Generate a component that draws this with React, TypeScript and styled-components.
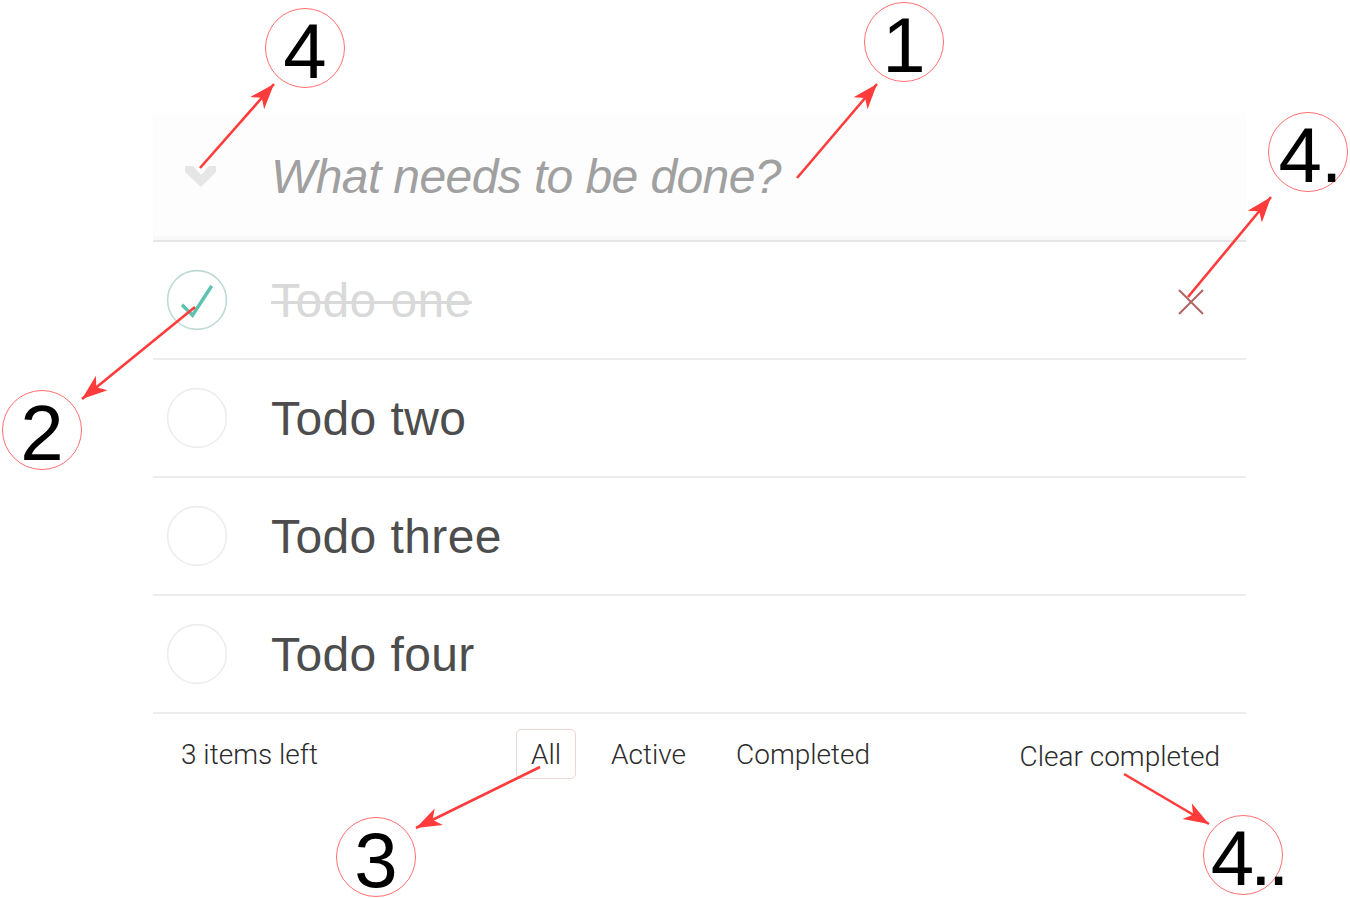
import React from "react";
import styled, { createGlobalStyle } from "styled-components";

const GlobalStyle = createGlobalStyle`
  html, body { margin: 0; padding: 0; background: #ffffff; }
  body { font-family: "Liberation Sans", Arial, sans-serif; }
  * { box-sizing: border-box; }
`;

const Stage = styled.div`
  position: relative;
  width: 1350px;
  height: 898px;
  overflow: hidden;
  padding: 113px 0 0 153px;
  background: #ffffff;
`;

const TodoApp = styled.section`
  width: 1093px;
`;

const Header = styled.header`
  display: flex;
  align-items: center;
  height: 127px;
  background: #fdfdfd;
  box-shadow: inset 0 -4px 2px rgba(0, 0, 0, 0.025);
`;

const ToggleAll = styled.div`
  width: 118px;
  flex: none;
  display: flex;
  align-items: center;
  padding-left: 32px;
`;

const NewTodo = styled.input`
  flex: 1;
  height: 127px;
  border: none;
  outline: none;
  background: transparent;
  padding: 0;
  font-family: "Liberation Sans", Arial, sans-serif;
  font-size: 48px;
  letter-spacing: -0.6px;
  color: #4d4d4d;
  &::placeholder {
    font-style: italic;
    color: #a0a0a0;
  }
`;

const TodoList = styled.ul`
  list-style: none;
  margin: 0;
  padding: 0;
  border-top: 2px solid #e6e6e6;
`;

const TodoItem = styled.li`
  display: flex;
  align-items: center;
  height: 118px;
  border-bottom: 2px solid #ededed;
`;

const ToggleCell = styled.div`
  width: 118px;
  flex: none;
  display: flex;
  align-items: center;
  padding-left: 14px;
`;

const Label = styled.span<{ $done?: boolean }>`
  font-family: "Liberation Sans", Arial, sans-serif;
  font-size: 48px;
  letter-spacing: 0.4px;
  color: ${(p) => (p.$done ? "#d9d9d9" : "#4d4d4d")};
  text-decoration: ${(p) => (p.$done ? "line-through" : "none")};
  text-decoration-thickness: 3px;
`;

const Destroy = styled.button`
  margin-left: auto;
  margin-right: 42px;
  border: none;
  background: none;
  padding: 0;
  display: flex;
  align-items: center;
  margin-top: 4px;
`;

const Footer = styled.footer`
  display: grid;
  grid-template-columns: 1fr auto 1fr;
  align-items: center;
  height: 80px;
  padding: 0 26px 0 28px;
  font-family: Roboto, "Liberation Sans", Arial, sans-serif;
  font-weight: 300;
  font-size: 28px;
  color: #2b2b2b;
`;

const Count = styled.span`
  justify-self: start;
`;

const Filters = styled.ul`
  list-style: none;
  margin: 0;
  padding: 0;
  display: flex;
  gap: 20px;
`;

const FilterLink = styled.a<{ $selected?: boolean }>`
  display: flex;
  align-items: center;
  height: 50px;
  padding: 0 14px;
  border: 1px solid ${(p) => (p.$selected ? "rgba(175, 47, 47, 0.2)" : "transparent")};
  border-radius: 5px;
  color: inherit;
  text-decoration: none;
`;

const ClearButton = styled.button`
  justify-self: end;
  border: none;
  background: none;
  padding: 4px 0 0 0;
  font: inherit;
  color: inherit;
`;

const Callout = styled.div<{ $x: number; $y: number; $indent: number; $tight: number }>`
  position: absolute;
  left: ${(p) => p.$x - 40}px;
  top: ${(p) => p.$y - 40}px;
  width: 80px;
  height: 80px;
  border-radius: 50%;
  border: 1px solid #ff6f6f;
  display: flex;
  align-items: center;
  justify-content: center;
  font-family: "Liberation Sans", Arial, sans-serif;
  font-size: 78px;
  line-height: 62px;
  letter-spacing: ${(p) => p.$tight}px;
  color: #000000;
  white-space: nowrap;
  & > span {
    padding-top: 6px;
    padding-left: ${(p) => p.$indent}px;
  }
`;

const ArrowLayer = styled.svg`
  position: absolute;
  left: 0;
  top: 0;
  pointer-events: none;
`;

const Chevron = () => (
  <svg width="32" height="22" viewBox="0 0 32 22">
    <polygon points="0,0 8,0 16,9 24,0 31,0 31,6 16,21 0,6" fill="#e6e6e6" />
  </svg>
);

const CheckCircle = ({ done }: { done: boolean }) => (
  <svg width="60" height="60" viewBox="0 0 100 100" style={{ overflow: "visible" }}>
    <circle cx="50" cy="50" r="49" fill="none" stroke={done ? "#bddad5" : "#ededed"} strokeWidth="2.6" />
    {done && <path d="M72 25L42 71 27 56l-4 4 20 20 34-52z" fill="#5dc2af" />}
  </svg>
);

const Cross = () => (
  <svg width="26" height="26" viewBox="0 0 26 26">
    <line x1="1" y1="1" x2="25" y2="25" stroke="#b06464" strokeWidth="2" />
    <line x1="25" y1="1" x2="1" y2="25" stroke="#b06464" strokeWidth="2" />
  </svg>
);

const arrows: [number, number, number, number][] = [
  [200, 168, 274, 84],
  [797, 178, 877, 84],
  [1188, 297, 1271, 197],
  [195, 307, 82, 399],
  [540, 767, 416, 828],
  [1124, 774, 1209, 824],
];

const callouts: { x: number; y: number; text: string; indent: number; tight: number }[] = [
  { x: 305, y: 48, text: "4", indent: 0, tight: 0 },
  { x: 904, y: 42, text: "1", indent: 0, tight: 0 },
  { x: 1308, y: 152, text: "4.", indent: 4, tight: -1 },
  { x: 42, y: 430, text: "2", indent: 0, tight: 0 },
  { x: 376, y: 857, text: "3", indent: 0, tight: 0 },
  { x: 1243, y: 855, text: "4..", indent: 10, tight: -4 },
];

const todos = [
  { title: "Todo one", done: true },
  { title: "Todo two", done: false },
  { title: "Todo three", done: false },
  { title: "Todo four", done: false },
];

export default function App() {
  return (
    <>
      <GlobalStyle />
      <Stage>
        <TodoApp>
          <Header>
            <ToggleAll>
              <Chevron />
            </ToggleAll>
            <NewTodo placeholder="What needs to be done?" />
          </Header>
          <TodoList>
            {todos.map((t) => (
              <TodoItem key={t.title}>
                <ToggleCell>
                  <CheckCircle done={t.done} />
                </ToggleCell>
                <Label $done={t.done}>{t.title}</Label>
                {t.done && (
                  <Destroy aria-label="delete">
                    <Cross />
                  </Destroy>
                )}
              </TodoItem>
            ))}
          </TodoList>
          <Footer>
            <Count>3 items left</Count>
            <Filters>
              <li>
                <FilterLink $selected href="#/">All</FilterLink>
              </li>
              <li>
                <FilterLink href="#/active">Active</FilterLink>
              </li>
              <li>
                <FilterLink href="#/completed">Completed</FilterLink>
              </li>
            </Filters>
            <ClearButton>Clear completed</ClearButton>
          </Footer>
        </TodoApp>

        <ArrowLayer width="1350" height="898" viewBox="0 0 1350 898">
          <defs>
            <marker
              id="head"
              markerUnits="userSpaceOnUse"
              markerWidth="30"
              markerHeight="30"
              viewBox="-24 -10 26 20"
              refX="0"
              refY="0"
              orient="auto"
            >
              <path d="M0,0 L-22,-8 L-16,0 L-22,8 z" fill="#ff3b3b" />
            </marker>
          </defs>
          {arrows.map(([x1, y1, x2, y2], i) => (
            <line
              key={i}
              x1={x1}
              y1={y1}
              x2={x2}
              y2={y2}
              stroke="#ff3b3b"
              strokeWidth="2.6"
              markerEnd="url(#head)"
            />
          ))}
        </ArrowLayer>

        {callouts.map((c) => (
          <Callout key={c.text + c.x} $x={c.x} $y={c.y} $indent={c.indent} $tight={c.tight}>
            <span>{c.text}</span>
          </Callout>
        ))}
      </Stage>
    </>
  );
}
